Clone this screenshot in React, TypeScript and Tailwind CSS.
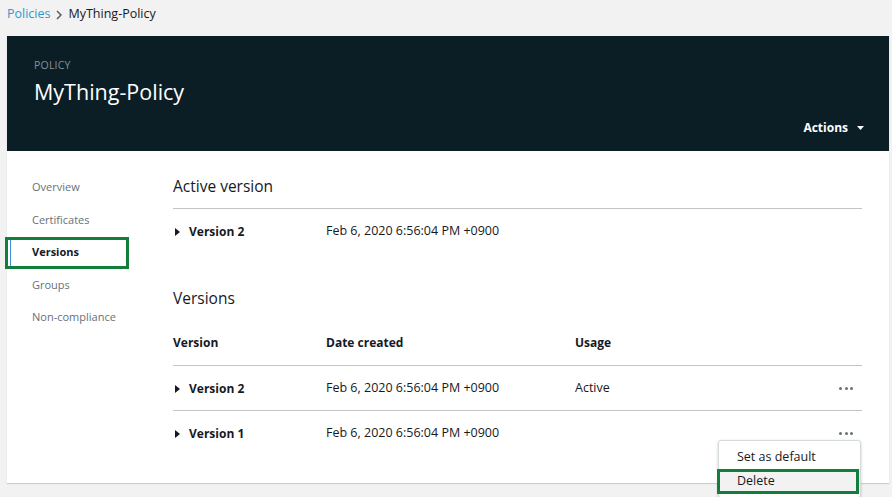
import React from 'react';

// Small right-pointing caret used by expandable rows
const Caret = () => (
    <svg width="5" height="8" viewBox="0 0 5 8" className="shrink-0">
        <path d="M0 0 L5 4 L0 8 Z" fill="#16191f" />
    </svg>
);

const Dots = () => (
    <div className="flex items-center gap-[2.5px]">
        <span className="h-[3px] w-[3px] rounded-full bg-[#687078]" />
        <span className="h-[3px] w-[3px] rounded-full bg-[#687078]" />
        <span className="h-[3px] w-[3px] rounded-full bg-[#687078]" />
    </div>
);

const navItems = ['Overview', 'Certificates', 'Versions', 'Groups', 'Non-compliance'];

const rows = [
    { version: 'Version 2', date: 'Feb 6, 2020 6:56:04 PM +0900', usage: 'Active' },
    { version: 'Version 1', date: 'Feb 6, 2020 6:56:04 PM +0900', usage: '' },
];

export default function App() {
    return (
        <main
            className="relative h-[497px] w-[892px] overflow-hidden bg-[#f2f2f2] px-[7px] text-[#16191f]"
            style={{ fontFamily: '"Open Sans", "Noto Sans", sans-serif' }}
        >
            {/* Breadcrumb */}
            <div className="flex h-[28px] items-center gap-[6px] pt-[1px] text-[12.5px]">
                <span className="text-[#2c98cf]">Policies</span>
                <svg width="6" height="10" viewBox="0 0 6 10">
                    <path d="M1 1 L5 5 L1 9" fill="none" stroke="#545b64" strokeWidth="1.5" />
                </svg>
                <span>MyThing-Policy</span>
            </div>

            {/* Card */}
            <div className="mt-[8px] w-[882px] bg-white shadow-[0_1px_1px_rgba(0,0,0,0.15)]">
                <div className="flex h-[115px] flex-col bg-[#0b1e26] pl-[27px] pr-[25px] pt-[22px]">
                    <div className="text-[10.5px] leading-[14px] tracking-[0.2px] text-[#879196]">POLICY</div>
                    <div className="mt-[6px] text-[21.5px] leading-[28px] text-white">MyThing-Policy</div>
                    <div className="mt-[14px] flex items-center justify-end gap-[9px] text-[12px] font-bold leading-[16px] text-white">
                        <span>Actions</span>
                        <svg width="7" height="4" viewBox="0 0 7 4">
                            <path d="M0 0 L7 0 L3.5 4 Z" fill="#ffffff" />
                        </svg>
                    </div>
                </div>

                <div className="flex">
                    {/* Side nav */}
                    <nav className="w-[166px] shrink-0 pt-[20px]">
                        {navItems.map((item) => (
                            <div
                                key={item}
                                className={`flex h-[32.5px] items-center pl-[25px] text-[11px] ${
                                    item === 'Versions' ? 'font-bold text-[#16191f]' : 'text-[#687078]'
                                }`}
                            >
                                {item}
                            </div>
                        ))}
                    </nav>

                    {/* Content */}
                    <div className="w-[689px] pb-[28px] pt-[24px]">
                        <div className="box-border h-[34px] border-b border-[#c4c4c4] text-[15.5px] leading-[22px]">
                            Active version
                        </div>
                        <div className="flex h-[44px] items-center pt-[1px] text-[12.5px]">
                            <div className="flex w-[153px] items-center gap-[9px] pl-[2px] text-[12px] font-bold">
                                <Caret />
                                Version 2
                            </div>
                            <div>Feb 6, 2020 6:56:04 PM +0900</div>
                        </div>

                        <div className="mt-[34px] text-[15.5px] leading-[22px]">Versions</div>

                        <div className="mt-[11px] flex box-border h-[46px] items-center border-b border-[#c4c4c4] text-[12px] font-bold">
                            <div className="w-[153px]">Version</div>
                            <div className="w-[249px]">Date created</div>
                            <div>Usage</div>
                        </div>
                        {rows.map((row, i) => (
                            <div
                                key={row.version}
                                className={`flex box-border items-center pt-[1px] text-[12.5px] ${
                                    i === 0 ? 'h-[45px] border-b border-[#c4c4c4]' : 'h-[44px]'
                                }`}
                            >
                                <div className="flex w-[153px] items-center gap-[9px] pl-[2px] text-[12px] font-bold">
                                    <Caret />
                                    {row.version}
                                </div>
                                <div className="w-[249px]">{row.date}</div>
                                <div className="flex-1">{row.usage}</div>
                                <div className="pr-[9px]">
                                    <Dots />
                                </div>
                            </div>
                        ))}
                    </div>
                </div>
            </div>

            {/* Annotation: Versions nav highlight */}
            <div className="absolute left-[5px] top-[237px] h-[32px] w-[124px] border-[3px] border-[#137e3c]">
                <div className="ml-[2px] h-full w-[1px] bg-[#3b8fd0]" />
            </div>

            {/* Row action menu */}
            <div className="absolute left-[718px] top-[440px] w-[143px] rounded-[3px] border border-[#d5dbdb] bg-white py-[4px] text-[12.5px] shadow-[0_1px_3px_rgba(0,0,0,0.2)]">
                <div className="flex h-[24px] items-center pl-[18px]">Set as default</div>
                <div className="flex h-[24px] items-center bg-[#f2f2f2] pl-[18px]">Delete</div>
            </div>
            <div className="absolute left-[717px] top-[469px] h-[25px] w-[142px] border-[3px] border-[#137e3c]" />
        </main>
    );
}
